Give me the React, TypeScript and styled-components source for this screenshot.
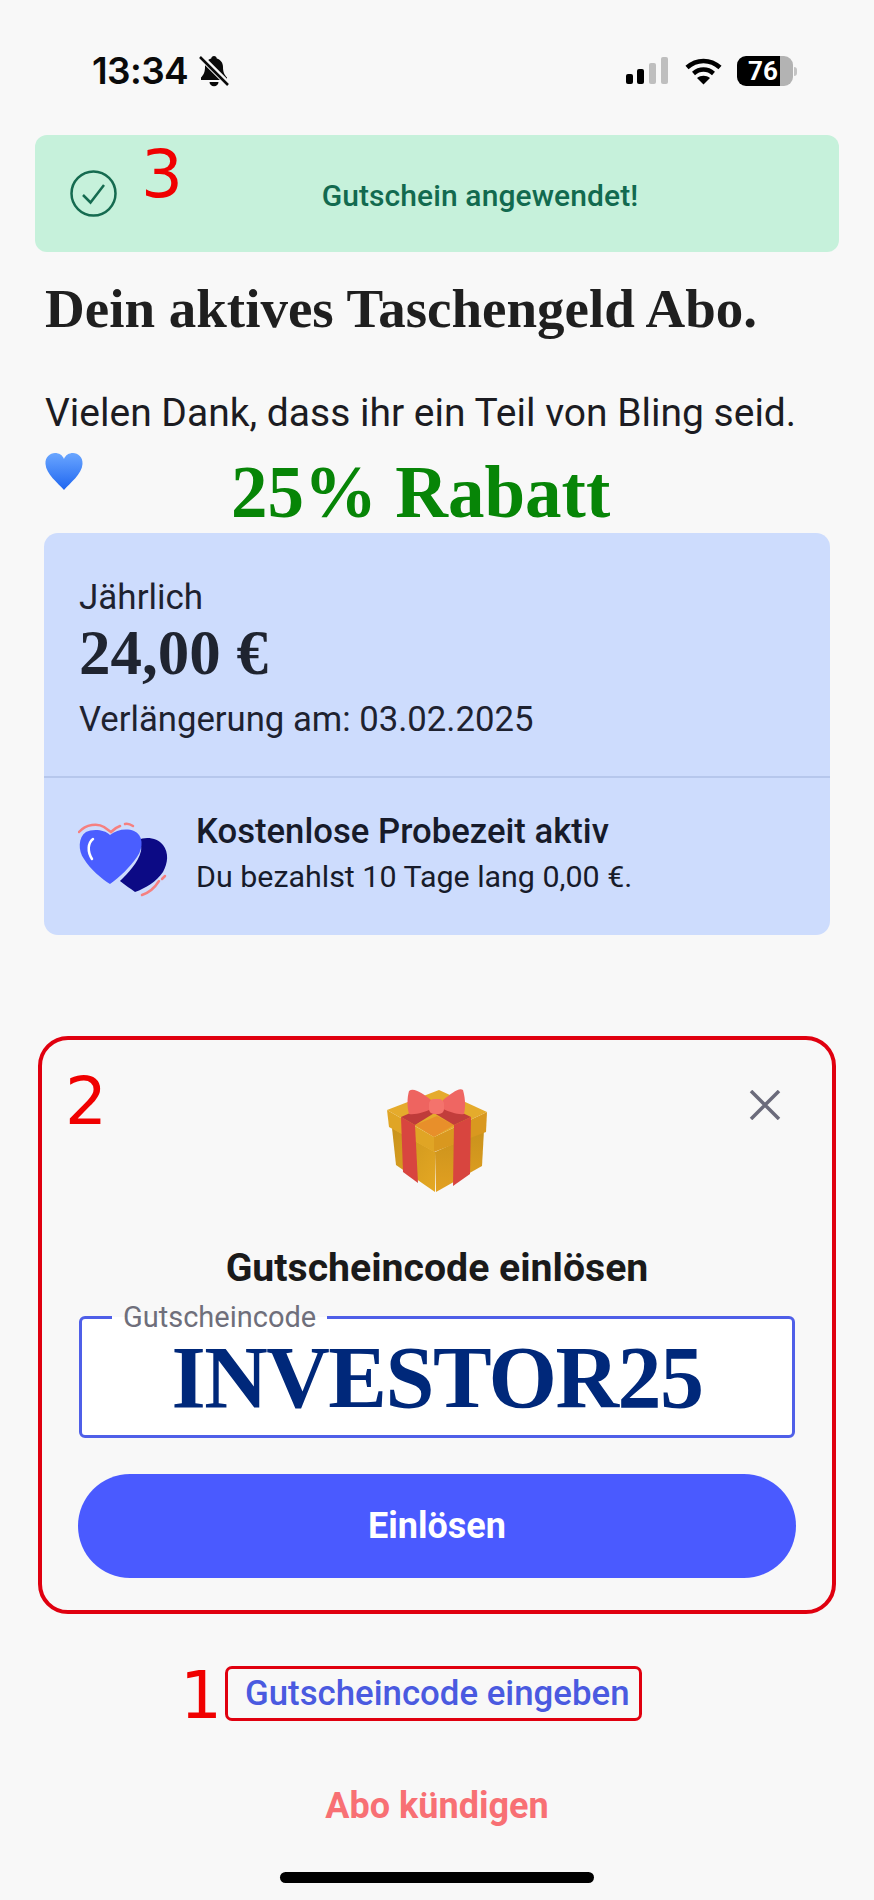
import React from "react";
import styled, { createGlobalStyle } from "styled-components";

const GlobalStyle = createGlobalStyle`
	html, body {
		margin: 0;
		padding: 0;
		background: #f8f8f8;
	}
	* {
		box-sizing: border-box;
	}
`;

const Page = styled.div`
	width: 874px;
	height: 1900px;
	overflow: hidden;
	display: flex;
	flex-direction: column;
	background: #f8f8f8;
	font-family: Roboto, "Liberation Sans", sans-serif;
`;

const StatusBar = styled.div`
	height: 135px;
	padding: 55px 77px 0 92px;
	display: flex;
	justify-content: space-between;
	align-items: flex-start;
`;

const StatusGroup = styled.div`
	height: 32px;
	display: flex;
	align-items: center;
`;

const Time = styled.span`
	font: 600 37px/32px Inter, Roboto, sans-serif;
	letter-spacing: -0.6px;
	color: #0a0a0a;
	margin-right: 11px;
`;

const Battery = styled.div`
	width: 56px;
	height: 30px;
	margin-left: 15px;
	border-radius: 9px;
	overflow: hidden;
	background: linear-gradient(to right, #000 76%, #b3b3b3 76%);
	color: #fff;
	font: 700 26px/30px Roboto, sans-serif;
	padding-left: 11px;
`;

const BatteryTip = styled.div`
	width: 3px;
	height: 9px;
	margin-left: 1px;
	border-radius: 0 3px 3px 0;
	background: #c4c4c4;
`;

const Banner = styled.div`
	position: relative;
	width: 804px;
	height: 117px;
	padding: 35px 0 0 35px;
	margin-left: 35px;
	display: flex;
	align-items: flex-start;
	border-radius: 12px;
	background: #c6f1db;
`;

const BannerText = styled.span`
	width: 100%;
	padding-left: 4px;
	margin-top: 8px;
	text-align: center;
	font: 500 30px/36px Roboto, sans-serif;
	letter-spacing: 0.1px;
	color: #126a4f;
`;

const Marker = styled.span<{ $left: number; $top: number }>`
	position: absolute;
	left: ${(p) => p.$left}px;
	top: ${(p) => p.$top}px;
	font: 400 66px/66px "DejaVu Sans", sans-serif;
	color: #f00000;
`;

const Heading = styled.h1`
	margin: 27px 0 0 45px;
	font: 700 55px/60px "Liberation Serif", serif;
	color: #1f1f1f;
`;

const Thanks = styled.p`
	margin: 50px 0 0 45px;
	font: 400 39px/48px Roboto, sans-serif;
	color: #1c1c22;
`;

const DiscountRow = styled.div`
	height: 80px;
	margin: 16px 0 0 45px;
	display: flex;
	align-items: flex-start;
`;

const Discount = styled.span`
	margin-left: 148px;
	font: 700 73px/80px "Liberation Serif", serif;
	color: #078507;
`;

const PlanCard = styled.section`
	width: 786px;
	height: 402px;
	margin-left: 44px;
	border-radius: 14px;
	background: #cddcfd;
	display: flex;
	flex-direction: column;
`;

const PlanTop = styled.div`
	height: 245px;
	padding: 45px 35px 0;
	border-bottom: 2px solid #b6c7ec;
	color: #1e2230;
`;

const PlanName = styled.div`
	font: 400 35px/40px Roboto, sans-serif;
`;

const Price = styled.div`
	margin-top: 0;
	font: 700 63px/70px "Liberation Serif", serif;
	color: #1f2430;
`;

const Renewal = styled.div`
	margin-top: 11px;
	font: 400 34.7px/40px Roboto, sans-serif;
`;

const TrialRow = styled.div`
	padding: 33px 0 0 34px;
	display: flex;
	align-items: flex-start;
	color: #171b2a;
`;

const TrialArt = styled.div`
	margin-top: 10px;
	flex-shrink: 0;
	line-height: 0;
`;

const TrialText = styled.div`
	margin-left: 26px;
`;

const TrialTitle = styled.div`
	font: 500 34.7px/40px Roboto, sans-serif;
`;

const TrialSub = styled.div`
	margin-top: 9px;
	font: 400 30.4px/34px Roboto, sans-serif;
`;

const RedeemBox = styled.section`
	position: relative;
	width: 798px;
	height: 578px;
	margin: 101px 0 0 38px;
	padding: 0 30px;
	border: 4px solid #e0000f;
	border-radius: 30px;
	display: flex;
	flex-direction: column;
	align-items: center;
`;

const GiftArt = styled.div`
	margin-top: 48px;
	line-height: 0;
`;

const CloseButton = styled.div`
	position: absolute;
	top: 50px;
	right: 51px;
	line-height: 0;
`;

const RedeemTitle = styled.h2`
	margin: 51px 0 0;
	font: 700 39.2px/46px Roboto, sans-serif;
	color: #1a1a1a;
	white-space: nowrap;
`;

const CodeField = styled.div`
	position: relative;
	width: 716px;
	height: 122px;
	margin-top: 25px;
	border: 3px solid #4f5fe8;
	border-radius: 6px;
	background: #fff;
	text-align: center;
`;

const CodeLabel = styled.span`
	position: absolute;
	left: 30px;
	top: -18px;
	padding: 0 11px;
	background: linear-gradient(to bottom, #f8f8f8 50%, #fff 50%);
	font: 400 29px/32px Roboto, sans-serif;
	color: #6f6f7b;
`;

const CodeValue = styled.div`
	font: 700 88px/118px "Liberation Serif", serif;
	letter-spacing: -1.5px;
	color: #00287a;
`;

const RedeemButton = styled.button`
	width: 718px;
	height: 104px;
	margin-top: 36px;
	flex-shrink: 0;
	border: 0;
	border-radius: 52px;
	background: #4a5aff;
	color: #fff;
	font: 700 36px/40px Roboto, sans-serif;
`;

const LinkBox = styled.div`
	position: relative;
	width: 417px;
	height: 55px;
	margin: 52px 0 0 225px;
	padding-left: 17px;
	border: 3px solid #e0000f;
	border-radius: 7px;
	font: 500 34.8px/49px Roboto, sans-serif;
	color: #4a5ae0;
	white-space: nowrap;
`;

const CancelLink = styled.div`
	margin-top: 63px;
	text-align: center;
	font: 700 36px/44px Roboto, sans-serif;
	color: #f87074;
`;

const HomeBar = styled.div`
	width: 314px;
	height: 11px;
	margin: 44px 0 0 280px;
	border-radius: 6px;
	background: #000;
`;

function BellOff() {
	return (
		<svg width="30" height="32" viewBox="0 0 30 32">
			<path
				d="M15 1c1.600 0 2.600 1 2.800 2.400 4 1.200 6.200 4.400 6.200 8.600 0 5 1.200 7.400 4 10.600v2.400H2v-2.400C4.800 19.400 6 17 6 12c0-4.200 2.200-7.400 6.200-8.600C12.400 2 13.400 1 15 1z"
				fill="#0a0a0a"
			/>
			<path d="M10.500 27h9c0 2.400-2 4.200-4.500 4.200s-4.500-1.800-4.500-4.200z" fill="#0a0a0a" />
			<path d="M1 1l28 28" stroke="#f8f8f8" strokeWidth="6" />
			<path d="M1 2l28 28" stroke="#0a0a0a" strokeWidth="2.500" />
		</svg>
	);
}

function SignalBars() {
	return (
		<svg width="42" height="28" viewBox="0 0 42 28">
			<rect x="0" y="17" width="7" height="10" rx="2" fill="#000" />
			<rect x="11" y="12" width="7" height="15" rx="2" fill="#000" />
			<rect x="23" y="6" width="7" height="21" rx="2" fill="#bfbfbf" />
			<rect x="35" y="0" width="7" height="27" rx="2" fill="#bfbfbf" />
		</svg>
	);
}

const WifiIcon = styled.svg`
	margin-left: 17px;
`;

function Wifi() {
	return (
		<WifiIcon width="37" height="27" viewBox="0 0 37 27">
			<path d="M2 9.500C11.500.700 25.500.700 35 9.500" fill="none" stroke="#000" strokeWidth="4.500" />
			<path d="M8.500 15.500c6-5.200 14-5.200 20 0" fill="none" stroke="#000" strokeWidth="4.500" />
			<path d="M18.500 26.500l-6.500-6.500c3.800-3 9.200-3 13 0z" fill="#000" />
		</WifiIcon>
	);
}

const CheckIcon = styled.svg`
	flex-shrink: 0;
`;

function CheckCircle() {
	return (
		<CheckIcon width="47" height="47" viewBox="0 0 47 47">
			<circle cx="23.500" cy="23.500" r="22" fill="none" stroke="#156b50" strokeWidth="2.500" />
			<path d="M13 25l7.500 7.500L34 15" fill="none" stroke="#156b50" strokeWidth="2.500" />
		</CheckIcon>
	);
}

function BlueHeart() {
	return (
		<svg width="38" height="37" viewBox="0 0 38 37">
			<defs>
				<linearGradient id="blueHeart" x1="0" y1="0" x2="0" y2="1">
					<stop offset="0" stopColor="#6aa6ff" />
					<stop offset="1" stopColor="#1f66f0" />
				</linearGradient>
			</defs>
			<path
				d="M19 37C13 30 1 21 0.500 11 0 4 5 0 10 0c4 0 7.500 2 9 6 1.500-4 5-6 9-6 5 0 10 4 9.500 11C37 21 25 30 19 37z"
				fill="url(#blueHeart)"
			/>
		</svg>
	);
}

function TwoHearts() {
	return (
		<svg width="92" height="78" viewBox="18 20 92 78">
			<path
				d="M60 80C68 72 78 62 81 50c1-5-1-8-3-11 8-4 20-2 25 5 6 8 5 18 0 27-7 10-17 16-28 20-4-3-10-7-15-11z"
				fill="#0c0a85"
			/>
			<path
				d="M50 34C44 28 32 28 26 31 18 36 18 50 24 58 30 68 42 78 50 83 60 76 70 66 77 56 84 46 83 34 74 30 66 27 56 29 50 34z"
				fill="#4a5eff"
			/>
			<path d="M33 38c-5 4-6 12-1 20" fill="none" stroke="#fff" strokeWidth="2.500" strokeLinecap="round" />
			<g fill="none" stroke="#f58080" strokeWidth="2.500" strokeLinecap="round">
				<path d="M19 31c7-8 19-9 25-5l7 5c3-3 6-5 9-6" />
				<path d="M65 23c3-1 5 0 8 2" />
				<path d="M82 94c6-2 12-6 17-14" />
				<path d="M102 78l3-3" />
			</g>
		</svg>
	);
}

function Gift() {
	return (
		<svg width="104" height="106" viewBox="26 26 104 106">
			<defs>
				<linearGradient id="giftLeft" x1="0" y1="0" x2="1" y2="1">
					<stop offset="0" stopColor="#c9931d" />
					<stop offset="1" stopColor="#e5a823" />
				</linearGradient>
				<linearGradient id="giftRight" x1="0" y1="0" x2="0" y2="1">
					<stop offset="0" stopColor="#c9921c" />
					<stop offset="1" stopColor="#e2a021" />
				</linearGradient>
			</defs>
			<path d="M33 66l43 24v40L37 103z" fill="url(#giftLeft)" />
			<path d="M76 90l49-22-2 36-46 26z" fill="url(#giftRight)" />
			<path d="M28 48l47 27v15L30 65z" fill="#e0a525" />
			<path d="M75 75l53-25-1 20-52 20z" fill="#d9981f" />
			<path d="M28 48L80 28l48 22-53 25z" fill="#e5ab2c" />
			<path d="M56 63l19 12 20-12-17-9z" fill="#e88f2a" />
			<path d="M42 55l14 8 3 58-15-11z" fill="#d8453f" />
			<path d="M95 63l17-8-1 57-17 12z" fill="#d8453f" />
			<path d="M42 55l30-13 13 3-29 18z" fill="#bf3b3a" />
			<path d="M95 63l17-8-27-13-15 6z" fill="#c23d3b" />
			<path d="M50 29c5-4 14 3 22 9v9c-6 3-15 6-22 5-2-7-2-16 0-23z" fill="#ee6460" />
			<path d="M104 28c-4-3-12 4-20 10v9c7 3 15 6 21 5 2-8 1-17-1-24z" fill="#ef6662" />
			<rect x="70" y="37" width="15" height="15" rx="5" fill="#f4736c" />
		</svg>
	);
}

function Close() {
	return (
		<svg width="32" height="30" viewBox="0 0 32 30">
			<path d="M2 1l28 28M30 1L2 29" stroke="#6b6b7b" strokeWidth="3.500" />
		</svg>
	);
}

export default function App() {
	return (
		<Page>
			<GlobalStyle />
			<StatusBar>
				<StatusGroup>
					<Time>13:34</Time>
					<BellOff />
				</StatusGroup>
				<StatusGroup>
					<SignalBars />
					<Wifi />
					<Battery>76</Battery>
					<BatteryTip />
				</StatusGroup>
			</StatusBar>

			<Banner>
				<CheckCircle />
				<BannerText>Gutschein angewendet!</BannerText>
				<Marker $left={106} $top={7}>3</Marker>
			</Banner>

			<Heading>Dein aktives Taschengeld Abo.</Heading>
			<Thanks>Vielen Dank, dass ihr ein Teil von Bling seid.</Thanks>
			<DiscountRow>
				<BlueHeart />
				<Discount>25% Rabatt</Discount>
			</DiscountRow>

			<PlanCard>
				<PlanTop>
					<PlanName>Jährlich</PlanName>
					<Price>24,00 €</Price>
					<Renewal>Verlängerung am: 03.02.2025</Renewal>
				</PlanTop>
				<TrialRow>
					<TrialArt>
						<TwoHearts />
					</TrialArt>
					<TrialText>
						<TrialTitle>Kostenlose Probezeit aktiv</TrialTitle>
						<TrialSub>Du bezahlst 10 Tage lang 0,00 €.</TrialSub>
					</TrialText>
				</TrialRow>
			</PlanCard>

			<RedeemBox>
				<Marker $left={23} $top={29}>2</Marker>
				<GiftArt>
					<Gift />
				</GiftArt>
				<CloseButton>
					<Close />
				</CloseButton>
				<RedeemTitle>Gutscheincode einlösen</RedeemTitle>
				<CodeField>
					<CodeLabel>Gutscheincode</CodeLabel>
					<CodeValue>INVESTOR25</CodeValue>
				</CodeField>
				<RedeemButton>Einlösen</RedeemButton>
			</RedeemBox>

			<LinkBox>
				Gutscheincode eingeben
				<Marker $left={-48} $top={-6}>1</Marker>
			</LinkBox>
			<CancelLink>Abo kündigen</CancelLink>
			<HomeBar />
		</Page>
	);
}
